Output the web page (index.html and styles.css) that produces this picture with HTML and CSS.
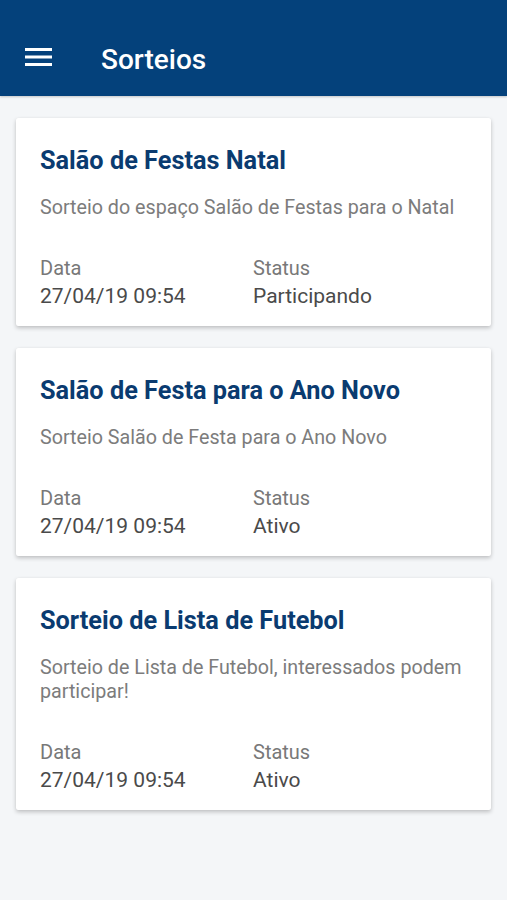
FILE: index.html
```html
<!DOCTYPE html>
<html lang="pt">
<head>
<meta charset="utf-8">
<title>Sorteios</title>
<link rel="stylesheet" href="styles.css">
</head>
<body>
<header class="appbar">
  <svg class="menu-icon" width="28" height="20" viewBox="0 0 28 20" aria-hidden="true">
    <rect x="0" y="1" width="27" height="3" fill="#fff"/>
    <rect x="0" y="8.5" width="27" height="3" fill="#fff"/>
    <rect x="0" y="16" width="27" height="3" fill="#fff"/>
  </svg>
  <h1 class="appbar-title">Sorteios</h1>
</header>
<main class="list">
  <article class="card">
    <h2 class="card-title">Salão de Festas Natal</h2>
    <p class="card-desc">Sorteio do espaço Salão de Festas para o Natal</p>
    <div class="card-meta">
      <div class="meta-col"><span class="meta-label">Data</span><span class="meta-value">27/04/19 09:54</span></div>
      <div class="meta-col"><span class="meta-label">Status</span><span class="meta-value">Participando</span></div>
    </div>
  </article>
  <article class="card">
    <h2 class="card-title">Salão de Festa para o Ano Novo</h2>
    <p class="card-desc">Sorteio Salão de Festa para o Ano Novo</p>
    <div class="card-meta">
      <div class="meta-col"><span class="meta-label">Data</span><span class="meta-value">27/04/19 09:54</span></div>
      <div class="meta-col"><span class="meta-label">Status</span><span class="meta-value">Ativo</span></div>
    </div>
  </article>
  <article class="card">
    <h2 class="card-title">Sorteio de Lista de Futebol</h2>
    <p class="card-desc">Sorteio de Lista de Futebol, interessados podem participar!</p>
    <div class="card-meta">
      <div class="meta-col"><span class="meta-label">Data</span><span class="meta-value">27/04/19 09:54</span></div>
      <div class="meta-col"><span class="meta-label">Status</span><span class="meta-value">Ativo</span></div>
    </div>
  </article>
</main>
</body>
</html>
```
FILE: styles.css
```css
* { box-sizing: border-box; }
html, body { margin: 0; padding: 0; }
body {
  background: #f4f6f8;
  font-family: Roboto, "Noto Sans", sans-serif;
  width: 507px;
  min-height: 900px;
}
.appbar {
  height: 96px;
  background: #04417b;
  display: flex;
  align-items: center;
  padding: 20px 0 0 25px;
  box-shadow: 0 1px 2px rgba(0,0,0,0.2);
}
.menu-icon { display: block; margin-top: -2px; }
.appbar-title {
  margin: 3px 0 0 48px;
  color: #fff;
  font-size: 28px;
  font-weight: 500;
  line-height: 32px;
}
.list {
  padding: 22px 16px;
  display: flex;
  flex-direction: column;
  gap: 22px;
}
.card {
  background: #fff;
  border-radius: 2px;
  box-shadow: 0 2px 4px rgba(0,0,0,0.22), 0 0 1px rgba(0,0,0,0.08);
  padding: 29px 24px 17px;
}
.card-title {
  margin: 0;
  color: #0a3b70;
  font-size: 25.3px;
  font-weight: 700;
  line-height: 28px;
}
.card-desc {
  margin: 21px 0 0;
  color: #7c7c7c;
  font-size: 19.7px;
  line-height: 24px;
}
.card-meta {
  margin-top: 37px;
  display: grid;
  grid-template-columns: 213px 1fr;
}
.meta-col { display: flex; flex-direction: column; }
.meta-label {
  color: #787878;
  font-size: 20px;
  line-height: 22px;
}
.meta-value {
  margin-top: 4px;
  color: #4a4a4a;
  font-size: 21px;
  line-height: 26px;
}
```
